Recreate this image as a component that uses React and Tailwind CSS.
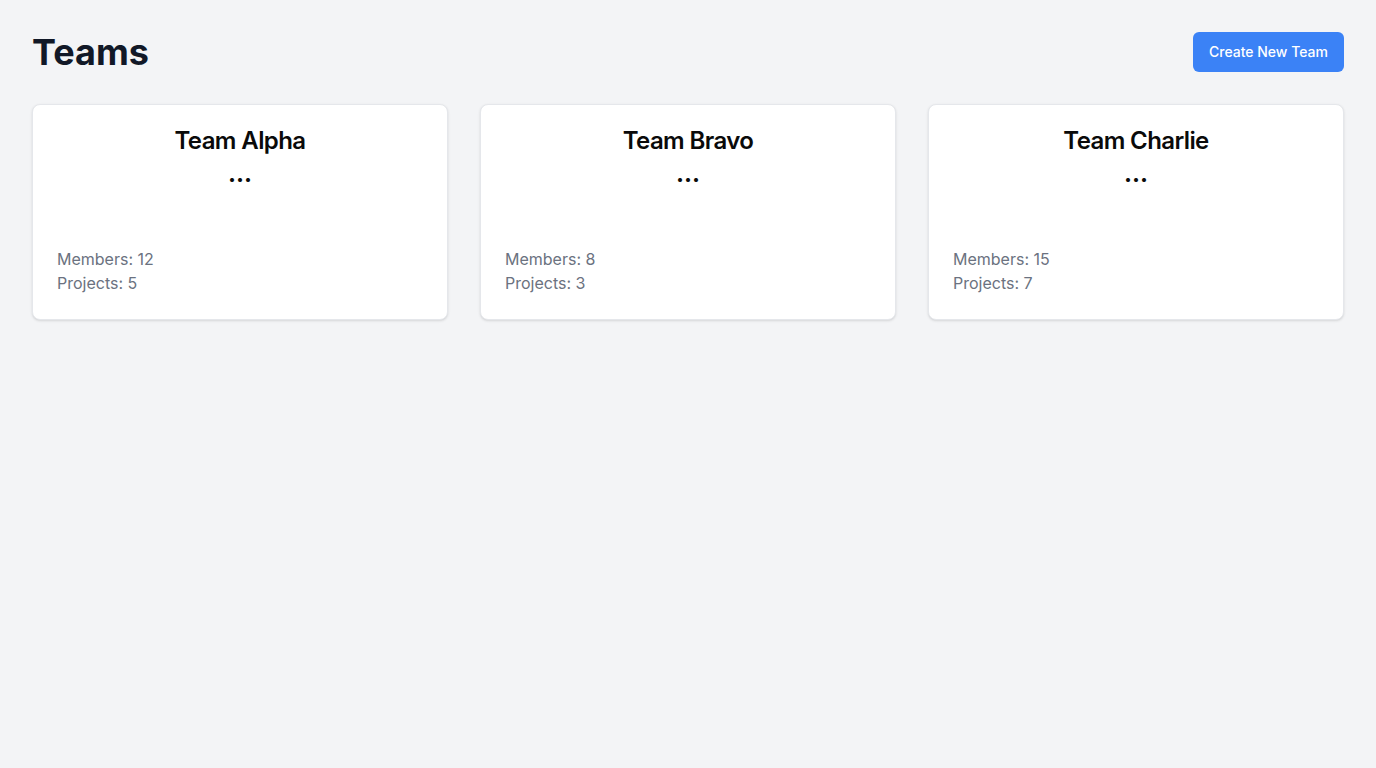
import React from "react";

const teams = [
  { name: "Team Alpha", members: 12, projects: 5 },
  { name: "Team Bravo", members: 8, projects: 3 },
  { name: "Team Charlie", members: 15, projects: 7 },
];

export default function App() {
  return (
    <div className="min-h-screen bg-[#f3f4f6] p-8" style={{ fontFamily: "Inter, 'Noto Sans', sans-serif" }}>
      <div className="mb-8 flex items-center justify-between">
        <h1 className="text-4xl font-bold leading-10 text-[#111827]">Teams</h1>
        <button className="rounded-md bg-[#3b82f6] px-4 py-2.5 text-sm font-medium leading-5 text-white">
          Create New Team
        </button>
      </div>
      <div className="grid grid-cols-3 gap-8">
        {teams.map((t) => (
          <div key={t.name} className="rounded-lg border border-[#e5e7eb] bg-white px-6 pb-6 pt-5 shadow-sm">
            <div className="flex flex-col items-center">
              <h2 className="text-2xl font-semibold leading-8 tracking-tight text-[#0a0a0a]">{t.name}</h2>
              <button className="mt-[3px] text-2xl font-bold leading-7 text-[#0a0a0a]">...</button>
            </div>
            <div className="mt-[59px] text-base leading-6 text-[#6b7280]">
              <p>Members: {t.members}</p>
              <p>Projects: {t.projects}</p>
            </div>
          </div>
        ))}
      </div>
    </div>
  );
}
